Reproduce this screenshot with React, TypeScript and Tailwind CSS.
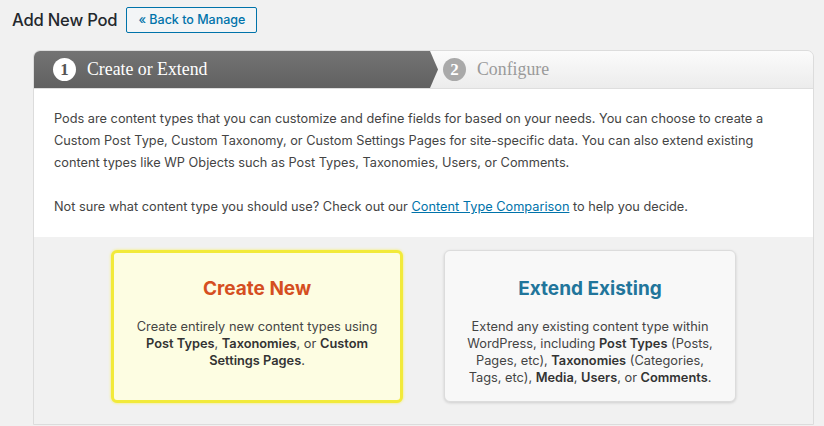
export default function App() {
  return (
    <div className="min-h-[426px] bg-[#f1f1f1] font-['Inter',_'Liberation_Sans',_sans-serif] text-[#444]">
      <div className="flex items-center gap-[9px] px-[12px] pt-[7px]">
        <h1 className="text-[16.6px] font-medium text-[#23282d] tracking-[-0.2px]">Add New Pod</h1>
        <a className="flex h-[26px] w-[131px] items-center justify-center rounded-[2px] border border-[#0073aa] bg-[#f3f5f6] text-[12.5px] font-medium text-[#0073aa]">
          « Back to Manage
        </a>
      </div>

      <div className="ml-[33px] mt-[17px] w-[781px] overflow-hidden rounded-t-[7px] border border-[#dcdcdc]">
        {/* steps */}
        <div className="flex h-[38px] bg-gradient-to-b from-[#fbfbfb] to-[#ececec] border-b border-[#dedede] font-['Liberation_Serif',_serif]">
          <div className="flex w-[404px] items-center gap-[11px] bg-gradient-to-b from-[#737373] to-[#616161] pl-[19px] [clip-path:polygon(0_0,calc(100%-8px)_0,100%_50%,calc(100%-8px)_100%,0_100%)]">
            <span className="flex h-[23px] w-[23px] items-center justify-center rounded-full bg-white text-[17px] font-bold text-[#555]">1</span>
            <span className="text-[17.8px] text-white">Create or Extend</span>
          </div>
          <div className="flex items-center gap-[11px] pl-[5px]">
            <span className="flex h-[23px] w-[23px] items-center justify-center rounded-full bg-[#a9a9a9] text-[17px] font-bold text-white">2</span>
            <span className="text-[17.8px] text-[#9a9a9a]">Configure</span>
          </div>
        </div>

        {/* intro */}
        <div className="bg-white px-[20px] py-[19px] text-[12.75px] leading-[22px] text-[#444]">
          <p>
            Pods are content types that you can customize and define fields for based on your needs. You can choose to create a
            Custom Post Type, Custom Taxonomy, or Custom Settings Pages for site-specific data. You can also extend existing
            content types like WP Objects such as Post Types, Taxonomies, Users, or Comments.
          </p>
          <p className="mt-[22px]">
            Not sure what content type you should use? Check out our{" "}
            <a className="text-[#0073aa] underline">Content Type Comparison</a> to help you decide.
          </p>
        </div>

        {/* choices */}
        <div className="flex justify-center gap-[41px] bg-[#f1f1f1] pt-[13px] pb-[21px]">
          <div className="h-[153px] w-[292px] rounded-[6px] border-[3px] border-[#f2ea3a] bg-[#fdfde2] px-[14px] pt-[22px] text-center shadow-[0_0_3px_#f5ee60]">
            <h2 className="text-[19px] leading-[28px] font-bold text-[#d54e21]">Create New</h2>
            <p className="mt-[15px] text-[12.8px] leading-[17px] text-[#444]">
              Create entirely new content types using <b className="font-semibold text-[#333]">Post Types</b>,{" "}
              <b className="font-semibold text-[#333]">Taxonomies</b>, or <b className="font-semibold text-[#333]">Custom Settings Pages</b>.
            </p>
          </div>
          <div className="h-[152px] w-[292px] rounded-[6px] border border-[#dcdcdc] bg-[#f8f8f8] px-[15px] pt-[24px] text-center shadow-[0_1px_3px_rgba(0,0,0,0.15)]">
            <h2 className="text-[19px] leading-[28px] font-bold text-[#21759b]">Extend Existing</h2>
            <p className="mt-[15px] text-[12.8px] leading-[17px] text-[#444]">
              Extend any existing content type within WordPress, including <b className="font-semibold text-[#333]">Post Types</b> (Posts,
              Pages, etc), <b className="font-semibold text-[#333]">Taxonomies</b> (Categories, Tags, etc),{" "}
              <b className="font-semibold text-[#333]">Media</b>, <b className="font-semibold text-[#333]">Users</b>, or{" "}
              <b className="font-semibold text-[#333]">Comments</b>.
            </p>
          </div>
        </div>
      </div>
    </div>
  );
}
